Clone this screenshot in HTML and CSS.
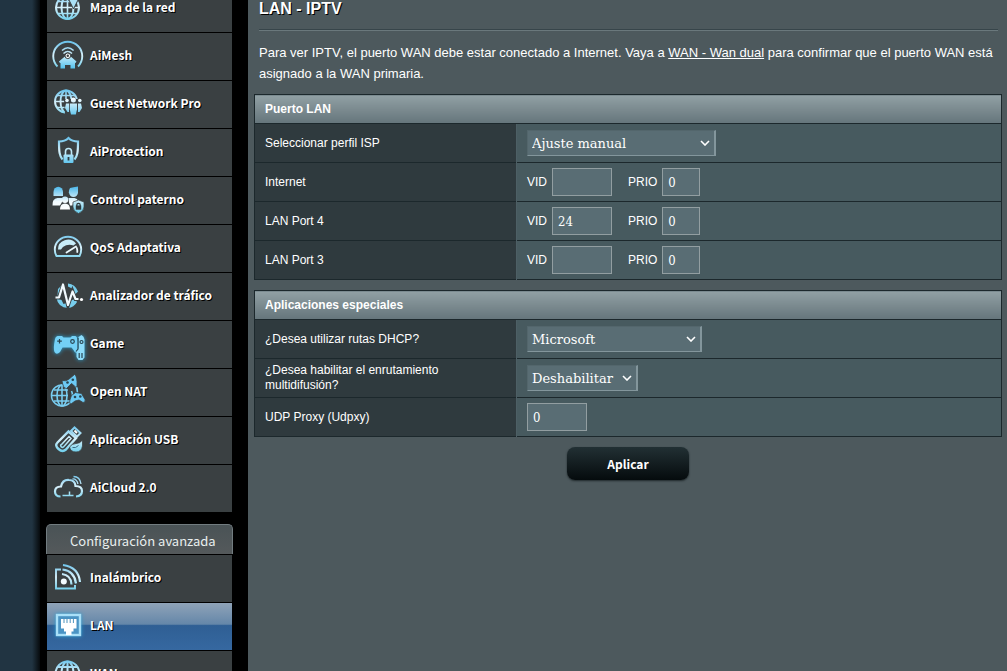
FILE: index.html
```
<!DOCTYPE html>
<html lang="es">
<head>
<meta charset="utf-8">
<title>LAN - IPTV</title>
<link rel="stylesheet" href="styles.css">
</head>
<body>
<svg class="defs" width="0" height="0" aria-hidden="true">
  <defs>
    <linearGradient id="ice" gradientUnits="userSpaceOnUse" x1="0" y1="3" x2="0" y2="29">
      <stop offset="0" stop-color="#6cc4ec"/><stop offset="0.5" stop-color="#d8f0fa"/><stop offset="1" stop-color="#6fcfec"/>
    </linearGradient>
    <linearGradient id="sky" gradientUnits="userSpaceOnUse" x1="0" y1="12" x2="0" y2="30">
      <stop offset="0" stop-color="#f2fbff"/><stop offset="1" stop-color="#4fc0ec"/>
    </linearGradient>
    <linearGradient id="snow" gradientUnits="userSpaceOnUse" x1="0" y1="4" x2="0" y2="28">
      <stop offset="0" stop-color="#4fb9ea"/><stop offset="0.6" stop-color="#f2fbff"/><stop offset="1" stop-color="#ffffff"/>
    </linearGradient>
  </defs>
</svg>
<div class="page">
  <nav class="sidebar">
    <ul class="menu">
      <li><a class="item" href="#mapa"><svg class="icon" viewBox="0 0 32 32"><g fill="none" stroke="url(#ice)" stroke-width="2"><circle cx="15.5" cy="16.5" r="11.5"/><ellipse cx="15.5" cy="16.5" rx="6" ry="11.5"/><path d="M15.5 5v23M4 16.5h23M6 10.500h19M6 22.500h19" stroke-width="1.600"/></g><path d="M21.500 18l-4-8a5 5 0 1 1 8 0z" fill="#a9e0f6" stroke="#3a4042"/><circle cx="21.500" cy="7" r="1.500" fill="#3a4042"/></svg>Mapa de la red</a></li>
      <li><a class="item" href="#aimesh"><svg class="icon" viewBox="0 0 32 32"><g fill="none" stroke="url(#ice)" stroke-width="1.900"><path d="M5.500 27.500A14.500 14.500 0 1 1 26 27.500"/><path d="M10 11.500Q15.800 6 21.600 11.500" stroke-width="1.500"/><path d="M11.500 14.500Q15.800 10.500 20 14.500" stroke-width="1.500"/></g><path d="M15.800 15l8.700 7.500-1 1.500H23v5.500h-4.500V26h-5.500v3.500H8.500V24h-.6l-1-1.500z" fill="url(#sky)"/><circle cx="15.800" cy="16.800" r="2.800" fill="#fff" stroke="#3a4042" stroke-width="1"/><circle cx="15.800" cy="16.800" r="1.200" fill="#3a4042"/></svg>AiMesh</a></li>
      <li><a class="item" href="#guest"><svg class="icon" viewBox="0 0 32 32"><g fill="none" stroke="url(#ice)" stroke-width="1.900"><circle cx="14" cy="14.500" r="11"/><ellipse cx="14" cy="14.500" rx="5.500" ry="11"/><path d="M14 3.500v22M3 14.500h22M5 8.500h18M5 20.500h18" stroke-width="1.600"/></g><path d="M12 12h18v15H13z" fill="#3a4042"/><g fill="url(#sky)"><circle cx="15" cy="13.500" r="1.800"/><circle cx="27.800" cy="13.500" r="1.800"/><path d="M14 16.500h3v8.500h-1.500L13 21zM29 16.500h-3v8.500h1.500L30 21z"/><circle cx="21.400" cy="13" r="2.500"/><path d="M17.800 16.500h7.200v6l-1.200 5h-4.800l-1.200-5z"/></g></svg>Guest Network Pro</a></li>
      <li><a class="item" href="#aiprotection"><svg class="icon" viewBox="0 0 32 32"><path d="M10.500 24.500C7.500 21 7 17 7 6.500c4 0 7-1 9.500-3.500C19 5.500 22 6.500 26 6.500c0 10.500-.5 14.500-3.500 18" fill="none" stroke="url(#ice)" stroke-width="2.200"/><path d="M13.500 20v-3.500a3 3 0 0 1 6 0V20" fill="none" stroke="#bfe9f8" stroke-width="1.600"/><rect x="11.500" y="19.500" width="10" height="8.500" rx="1" fill="url(#sky)"/><path d="M16.500 22v3.500" stroke="#2f3a3e" stroke-width="1.800"/></svg>AiProtection</a></li>
      <li><a class="item" href="#paterno"><svg class="icon" viewBox="0 0 32 32"><g fill="url(#snow)"><path d="M1.500 13V9a4.500 5 0 0 1 9.500 0v4z"/><path d="M18 5q3-1 8-1.500V10q-1 4-4.500 4T16.800 9.500q0-3 1.200-4.500z"/><path d="M.5 22.500q-.5-7 5-7.500h4.500v4l-2 3.500z"/><circle cx="13" cy="16.800" r="3.200"/><path d="M8 26.500q0-6 5-6t5 6z"/><path d="M16.500 15h6q3 .5 3.500 2.500l-5 2-.5 3h-2.500l-1-3z"/></g><path d="M26.500 17l5.500 2v5q0 4-5.500 6.500Q21 28 21 24v-5z" fill="url(#ice)" stroke="#3a4042" stroke-width=".7"/><rect x="23.800" y="22.500" width="5.400" height="4.200" fill="#2f3a3e"/><path d="M24.800 23v-1a1.700 1.700 0 0 1 3.400 0v1" fill="none" stroke="#2f3a3e" stroke-width="1.200"/></svg>Control paterno</a></li>
      <li><a class="item" href="#qos"><svg class="icon" viewBox="0 0 32 32"><path d="M4.500 25Q2.800 22 2.800 18.500a13.200 12.700 0 0 1 26.400 0Q29.200 22 27.500 25z" fill="none" stroke="url(#ice)" stroke-width="1.900"/><path d="M6 18.500A10 9.500 0 0 1 24 12.500L21.500 14.500A9 7 0 0 0 9 18.500z" fill="#c8edf9"/><path d="M14.500 21.500L24 15.500M24.800 17q.7 2 .5 4" stroke="#e9f8fd" stroke-width="1.800" fill="none" stroke-linecap="round"/></svg>QoS Adaptativa</a></li>
      <li><a class="item" href="#trafico"><svg class="icon" viewBox="0 0 32 32"><g fill="#77cdec"><path d="M16 4.500q7 .5 10 8l-3 3-3-2v-4l-4-2zM6 10l4-4 1 4-2.500 6-3 1zM4.500 19l5 2 2 4 3-1 1.500 5q-10-.5-11.500-10zM16 23l4-2 3-1 2 3q-3 5.500-9 6z"/></g><path d="M3.500 18.500h3.500l4-12 5 19.500 4.500-13.500 3 7.500h4" fill="none" stroke="#3a4042" stroke-width="4"/><path d="M3.500 18.500h3.500l4-13 5 20.500 4.500-13.500 3 7.500h3" fill="none" stroke="#f2fbff" stroke-width="2.200" stroke-linejoin="round"/><circle cx="29.500" cy="20.500" r="1.600" fill="#fff"/></svg>Analizador de tráfico</a></li>
      <li><a class="item" href="#game"><svg class="icon glow" viewBox="0 0 32 32"><path d="M5.500 9H10l1.500 1.500h7L20 9h3.500q2 1 2.500 6v10q-3 2-4.500-2L19.500 20.500h-9L8 25q-3.500 3.500-5.500 0-1.500-3 .5-13 .5-2.500 2.500-3z" fill="#73d0f6"/><path d="M26.500 10l3-2q2.500 1 3 4.500v18l-2 2.500h-4l-2-3v-6l2-3z" fill="#8cdcfa"/><g stroke="#294551" fill="none" stroke-width="1.200"><path d="M7.500 12v4.500M5.200 14.200h4.600M26 11v11l-2 2.500M27.200 26v5M30 26v5"/><circle cx="20.500" cy="14.500" r="1.800"/><circle cx="29.500" cy="15" r="1.500"/></g></svg>Game</a></li>
      <li><a class="item" href="#nat"><svg class="icon" viewBox="0 0 32 32"><g fill="none" stroke="#79cdf1" stroke-width="1.600"><path d="M19.500 16a10.500 10.500 0 1 1-7-5.700"/><ellipse cx="10" cy="20.500" rx="5" ry="10.500"/><path d="M10 10v21M-.5 20.500H16M2 15h14M2 26h16M23 9.500q2.500 3 2.500 8"/></g><g stroke="#3a4042" stroke-width=".8" fill="#6ccaf5"><path d="M10 5.500q4 1 6.500-1t6-5q3 1 2.500 12-1 2-3.500-1.500L19.500 8.500 17.500 10.500l-3 3q-3.500 0-4.500-8z"/><path d="M19.500 20.500l4-3 6 1 3.500 6q1 3-2 3l-4-2.500-4 1-4 3q-3 0 .5-8.500z"/></g><g fill="#294551"><circle cx="15.500" cy="7.500" r="1.300"/><circle cx="20.800" cy="4.800" r="1.300"/><circle cx="23" cy="22" r="1.300"/><circle cx="28.300" cy="21.500" r="1.300"/></g></svg>Open NAT</a></li>
      <li><a class="item" href="#usb"><svg class="icon" viewBox="0 0 32 32"><g fill="none" stroke="url(#ice)"><path d="M16.500 8.500l7.500 6.500-10 11.500q-3.500 3-7.500-.5t-1-6.500z" stroke-width="2.400"/><path d="M17 13.500l2 2L11.500 24q-1.500 1-2.500-.5t.5-2z" stroke-width="1.500"/><path d="M19 8l3.500-3.500L28.500 10 25 13.500z" stroke-width="2"/></g><path d="M22.500 7.500l2.500 2.500" stroke="#fff" stroke-width="2"/><path d="M30.500 17v6q-1 6-6.500 6T17.500 24q2.500-3.500 6.500-3.500t6.500-3.500z" fill="url(#ice)" stroke="#3a4042" stroke-width=".8"/><path d="M20.500 24.500q3 1 6-2" stroke="#3a6f88" stroke-width="1" fill="none"/></svg>Aplicación USB</a></li>
      <li><a class="item" href="#aicloud"><svg class="icon" viewBox="0 0 32 32"><g fill="none" stroke="url(#ice)" stroke-width="2.200"><path d="M8.500 25.500Q3 25.500 3 20.500t6-5q1.500-7 8-6.500 6 0 6.500 6 6.500 0 6.500 5t-6 5.500"/><path d="M20.500 8q4-.5 5.500 5M21.500 5.500q6.500 0 7.500 7.500" stroke-width="1.300"/><path d="M10.500 24.500h11M17.500 20.500v4" stroke-width="1.500"/></g></svg>AiCloud 2.0</a></li>
    </ul>
    <h2 class="menu-title">Configuración avanzada</h2>
    <ul class="menu">
      <li><a class="item" href="#inalambrico"><svg class="icon" viewBox="0 0 32 32"><g fill="none" stroke="url(#ice)" stroke-width="2.200"><path d="M9 8.500H4v19h19V24" stroke-width="1.900"/><path d="M10 13q9 1 9.500 10.500M10.500 8.500Q22.500 10 24 22.500M11 4Q26.500 6 28 21"/></g><circle cx="11.800" cy="20.500" r="3" fill="#f2fbff"/></svg>Inalámbrico</a></li>
      <li><a class="item active" href="#lan" aria-current="page"><svg class="icon glow" viewBox="0 0 32 32"><rect x="5" y="6" width="23" height="20" fill="#4a94c4" stroke="#a9e0f8" stroke-width="2.400"/><path d="M9 10H24.500v9.500h-3v3H19.500V26h-5.500v-3.500h-2v-3H9z" fill="#fff"/><path d="M12 9.500v4.500M15 9.500v4.500M18.200 9.500v4.500M21.400 9.500v4.500" stroke="#4d93bd" stroke-width="1"/></svg>LAN</a></li>
      <li><a class="item" href="#wan"><svg class="icon" viewBox="0 0 32 32"><g fill="none" stroke="url(#ice)" stroke-width="2"><circle cx="15.500" cy="16.500" r="12"/><ellipse cx="15.500" cy="16.500" rx="6" ry="12"/><path d="M15.500 4.500v24M3.500 16.500h24M6 10h19M6 23h19"/></g></svg>WAN</a></li>
    </ul>
  </nav>
  <main class="content">
    <header class="intro">
      <h1>LAN - IPTV</h1>
      <p>Para ver IPTV, el puerto WAN debe estar conectado a Internet. Vaya a <a href="#wan-dual">WAN - Wan dual</a> para confirmar que el puerto WAN está asignado a la WAN primaria.</p>
    </header>
    <form class="settings">
      <table class="panel">
        <colgroup><col class="col-name"><col></colgroup>
        <thead><tr><th colspan="2" scope="colgroup">Puerto LAN</th></tr></thead>
        <tbody>
          <tr><th scope="row"><label for="isp">Seleccionar perfil ISP</label></th><td><span class="pick"><select id="isp" class="wide"><option>Ajuste manual</option></select><svg class="chevron" viewBox="0 0 10 6" aria-hidden="true"><path d="M1 1l4 4 4-4"/></svg></span></td></tr>
          <tr><th scope="row">Internet</th><td><div class="pair"><label for="vid0">VID</label><input id="vid0" class="vid" type="text"><label for="prio0">PRIO</label><input id="prio0" class="prio" type="text" value="0"></div></td></tr>
          <tr><th scope="row">LAN Port 4</th><td><div class="pair"><label for="vid4">VID</label><input id="vid4" class="vid" type="text" value="24"><label for="prio4">PRIO</label><input id="prio4" class="prio" type="text" value="0"></div></td></tr>
          <tr><th scope="row">LAN Port 3</th><td><div class="pair"><label for="vid3">VID</label><input id="vid3" class="vid" type="text"><label for="prio3">PRIO</label><input id="prio3" class="prio" type="text" value="0"></div></td></tr>
        </tbody>
      </table>
      <table class="panel">
        <colgroup><col class="col-name"><col></colgroup>
        <thead><tr><th colspan="2" scope="colgroup">Aplicaciones especiales</th></tr></thead>
        <tbody>
          <tr><th scope="row"><label for="dhcp">¿Desea utilizar rutas DHCP?</label></th><td><span class="pick"><select id="dhcp" class="medium"><option>Microsoft</option></select><svg class="chevron" viewBox="0 0 10 6" aria-hidden="true"><path d="M1 1l4 4 4-4"/></svg></span></td></tr>
          <tr><th scope="row"><label for="multi">¿Desea habilitar el enrutamiento multidifusión?</label></th><td><span class="pick"><select id="multi" class="narrow"><option>Deshabilitar</option></select><svg class="chevron" viewBox="0 0 10 6" aria-hidden="true"><path d="M1 1l4 4 4-4"/></svg></span></td></tr>
          <tr><th scope="row"><label for="udp">UDP Proxy (Udpxy)</label></th><td><input id="udp" class="vid" type="text" value="0"></td></tr>
        </tbody>
      </table>
      <button class="apply" type="button">Aplicar</button>
    </form>
  </main>
</div>
</body>
</html>
```
FILE: styles.css
```
* { box-sizing: border-box; }

body {
  margin: 0;
  background: #213442;
  color: #fff;
  font-family: "Liberation Sans", Arial, sans-serif;
  font-size: 12px;
}

.defs { position: absolute; }

.page {
  display: flex;
  height: 100vh;
  overflow: hidden;
  padding-left: 40px;
  background: linear-gradient(90deg, #213442 32px, #000 42px);
}

/* Sidebar */
.sidebar {
  flex: 0 0 208px;
  margin-top: -16px;
  padding: 0 16px 0 7px;
  background: #000;
  font-family: "Noto Sans CJK SC", "Noto Sans", sans-serif;
}

.menu {
  margin: 0;
  padding: 0;
  list-style: none;
}

.item {
  display: flex;
  align-items: center;
  gap: 6px;
  height: 47px;
  margin-top: 1px;
  padding: 0 4px 4px 5px;
  background: #3a4042;
  color: #fff;
  font-size: 12px;
  font-weight: 700;
  text-decoration: none;
  text-shadow: 1px 1px 0 #000;
  white-space: nowrap;
}

.item.active {
  background: linear-gradient(#8fa3b8, #6587a9 45%, #2f5f94 48%, #3668a0);
}

.icon {
  flex: none;
  width: 32px;
  height: 32px;
  overflow: visible;
}

.icon.glow { filter: drop-shadow(0 0 2px #2b9fd0); }

.menu-title {
  height: 30px;
  margin: 12px -1px 0;
  padding-left: 23px;
  border: 1px solid #727c80;
  border-bottom: 0;
  border-radius: 5px 5px 0 0;
  background: linear-gradient(#4a5356, #54595b);
  color: #e8eeee;
  font-size: 13px;
  font-weight: 400;
  line-height: 32px;
  white-space: nowrap;
}

/* Content */
.content {
  flex: 1;
  min-width: 0;
  padding: 0 5px 0 6px;
  background: #4d595d;
}

.intro { padding: 0 4px 0 5px; }

.intro h1 {
  margin: 0;
  padding-bottom: 12px;
  border-bottom: 1px solid #6a787c;
  box-shadow: inset 0 -1px 0 #37454a;
  font-size: 16px;
  line-height: 18px;
  text-shadow: 1px 1px 0 #000;
}

.intro p {
  margin: 11px 0 10px;
  font-size: 13px;
  line-height: 21px;
}

.intro a { color: #fff; }

.panel {
  width: 100%;
  margin-bottom: 10px;
  border: 1px solid #1c282c;
  border-collapse: collapse;
  table-layout: fixed;
}

.col-name { width: 262px; }

.panel th,
.panel td {
  height: 39px;
  padding: 0 10px;
  border-top: 1px solid #1c282c;
  text-align: left;
}

.panel thead th {
  height: 29px;
  background: linear-gradient(#91a0a4, #65757b);
}

.panel tbody th {
  padding-right: 60px;
  background: #2f3a3e;
  font-weight: 400;
  line-height: 15px;
}

.panel td {
  border-left: 1px solid #4d5f65;
  background: #475a5f;
}

.pair {
  display: flex;
  align-items: center;
}

.pair label { margin-right: 5px; }
.pair .vid { margin-right: 16px; }

input,
select {
  display: block;
  margin: 0;
  background: #596d74;
  color: #fff;
  font-family: "DejaVu Serif", serif;
  font-size: 13px;
}

input {
  height: 28px;
  padding: 0 5px;
  border: 1px solid #929ea1;
  font-family: "DejaVu Serif Condensed", "DejaVu Serif", serif;
}

.pick {
  display: inline-grid;
  align-items: center;
  vertical-align: middle;
}

.pick > * { grid-area: 1 / 1; }

select {
  height: 26px;
  padding: 0 4px;
  border: 1px solid #53666c;
  border-right: 2px solid #83969c;
  border-bottom-color: #83969c;
  border-radius: 0;
  appearance: none;
}

.chevron {
  justify-self: end;
  width: 10px;
  height: 6px;
  margin-right: 6px;
  fill: none;
  stroke: #fff;
  stroke-width: 1.6;
  pointer-events: none;
}

.vid { width: 60px; }
.prio { width: 38px; }
.wide { width: 189px; }
.medium { width: 175px; }
.narrow { width: 111px; }

.apply {
  display: block;
  width: 122px;
  height: 33px;
  margin: 0 auto;
  border: 0;
  border-radius: 8px;
  background: linear-gradient(#223034, #050b0d);
  box-shadow: 0 1px 2px #20292c;
  color: #fff;
  font-family: "Noto Sans CJK SC", "Noto Sans", sans-serif;
  font-size: 12px;
  font-weight: 700;
}
```
